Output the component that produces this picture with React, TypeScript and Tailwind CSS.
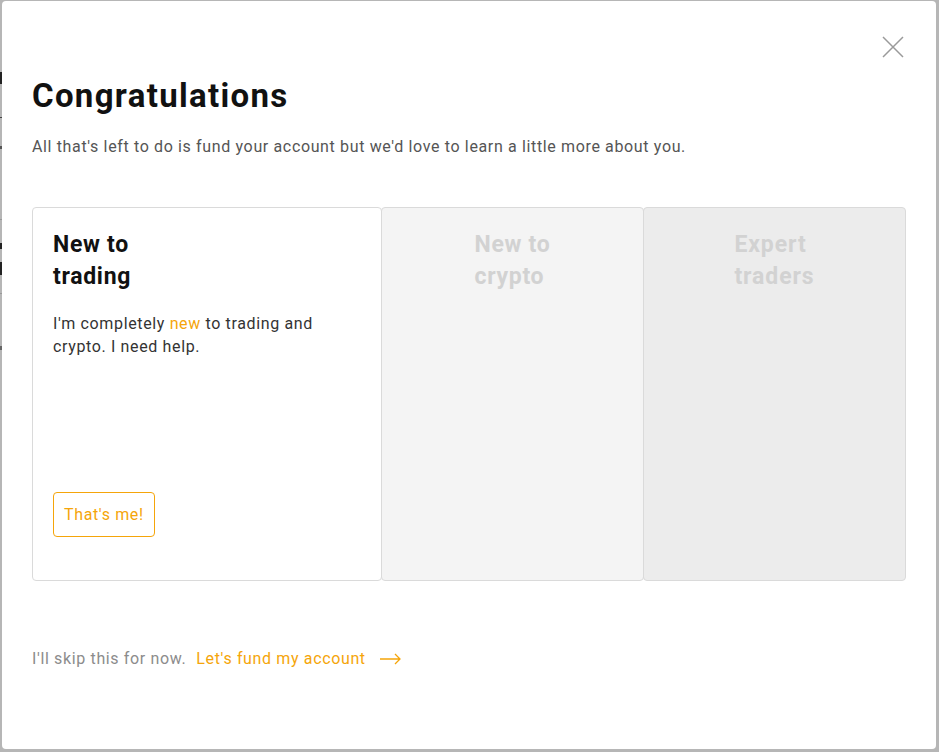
import React from "react";

const font = { fontFamily: "Roboto, 'Noto Sans', sans-serif" };

export default function App() {
  return (
    <div className="relative w-[939px] h-[752px] bg-[#b6b6b6] overflow-hidden" style={font}>
      {/* bits of the page behind the overlay */}
      <div className="absolute left-0 top-[72px] w-[2px] h-[12px] bg-[#222]" />
      <div className="absolute left-0 top-[117px] w-[2px] h-[1px] bg-[#444]" />
      <div className="absolute left-0 top-[146px] w-[2px] h-[3px] bg-[#555]" />
      <div className="absolute left-0 top-[219px] w-[2px] h-[1px] bg-[#999]" />
      <div className="absolute left-0 top-[243px] w-[2px] h-[6px] bg-[#222]" />
      <div className="absolute left-0 top-[262px] w-[2px] h-[13px] bg-[#222]" />
      <div className="absolute left-0 top-[293px] w-[2px] h-[1px] bg-[#999]" />
      <div className="absolute left-0 top-[346px] w-[2px] h-[4px] bg-[#666]" />

      <div className="relative ml-[2px] mt-[1px] w-[934px] h-[748px] bg-white rounded-[4px] px-[30px] pt-[75px]">
        <button className="absolute left-[880px] top-[35px] w-[22px] h-[22px] flex items-center justify-center">
          <svg width="22" height="22" viewBox="0 0 22 22">
            <path d="M1 1 L21 21 M21 1 L1 21" stroke="#9a9a9a" strokeWidth="1.5" fill="none" />
          </svg>
        </button>

        <h1 className="text-[33px] leading-[40px] font-bold text-[#111] tracking-[0.04em]">Congratulations</h1>
        <p className="mt-[19px] text-[16px] leading-[24px] text-[#555] tracking-[0.04em]">
          All that's left to do is fund your account but we'd love to learn a little more about you.
        </p>

        <div className="mt-[48px] flex h-[374px]">
          <div className="relative z-10 w-[350px] h-full bg-white border border-[#dadada] rounded-[4px] pl-[20px] pr-[20px] pt-[21px] pb-[43px] flex flex-col">
            <h2 className="text-[23px] leading-[32px] font-bold text-[#111] tracking-[0.03em]">
              New to
              <br />
              trading
            </h2>
            <p className="mt-[19px] text-[16px] leading-[23px] text-[#333] tracking-[0.04em]">
              I'm completely <span className="text-[#f5a50a]">new</span> to trading and
              <br />
              crypto. I need help.
            </p>
            <button className="mt-auto self-start h-[45px] px-[10px] border border-[#f5a50a] rounded-[4px] text-[16px] text-[#f5a50a] tracking-[0.04em]">
              That's me!
            </button>
          </div>
          <div className="-ml-px w-[263px] h-full bg-[#f4f4f4] border border-[#dadada] rounded-[4px] pt-[21px] flex justify-center">
            <h2 className="text-[23px] leading-[32px] font-bold text-[#d2d2d2] tracking-[0.03em]">
              New to
              <br />
              crypto
            </h2>
          </div>
          <div className="-ml-px flex-1 h-full bg-[#ececec] border border-[#dadada] rounded-[4px] pt-[21px] flex justify-center">
            <h2 className="text-[23px] leading-[32px] font-bold text-[#d2d2d2] tracking-[0.04em]">
              Expert
              <br />
              traders
            </h2>
          </div>
        </div>

        <div className="mt-[66px] flex items-center text-[16px] leading-[24px]">
          <span className="text-[#8c8c8c] tracking-[0.04em]">I'll skip this for now.</span>
          <span className="ml-[10px] text-[#f5a50a] tracking-[0.04em]">Let's fund my account</span>
          <svg className="ml-[14px]" width="21" height="12" viewBox="0 0 21 12">
            <path d="M0 6 H20 M15 1 L20 6 L15 11" stroke="#f5a50a" strokeWidth="1.3" fill="none" />
          </svg>
        </div>
      </div>
    </div>
  );
}
